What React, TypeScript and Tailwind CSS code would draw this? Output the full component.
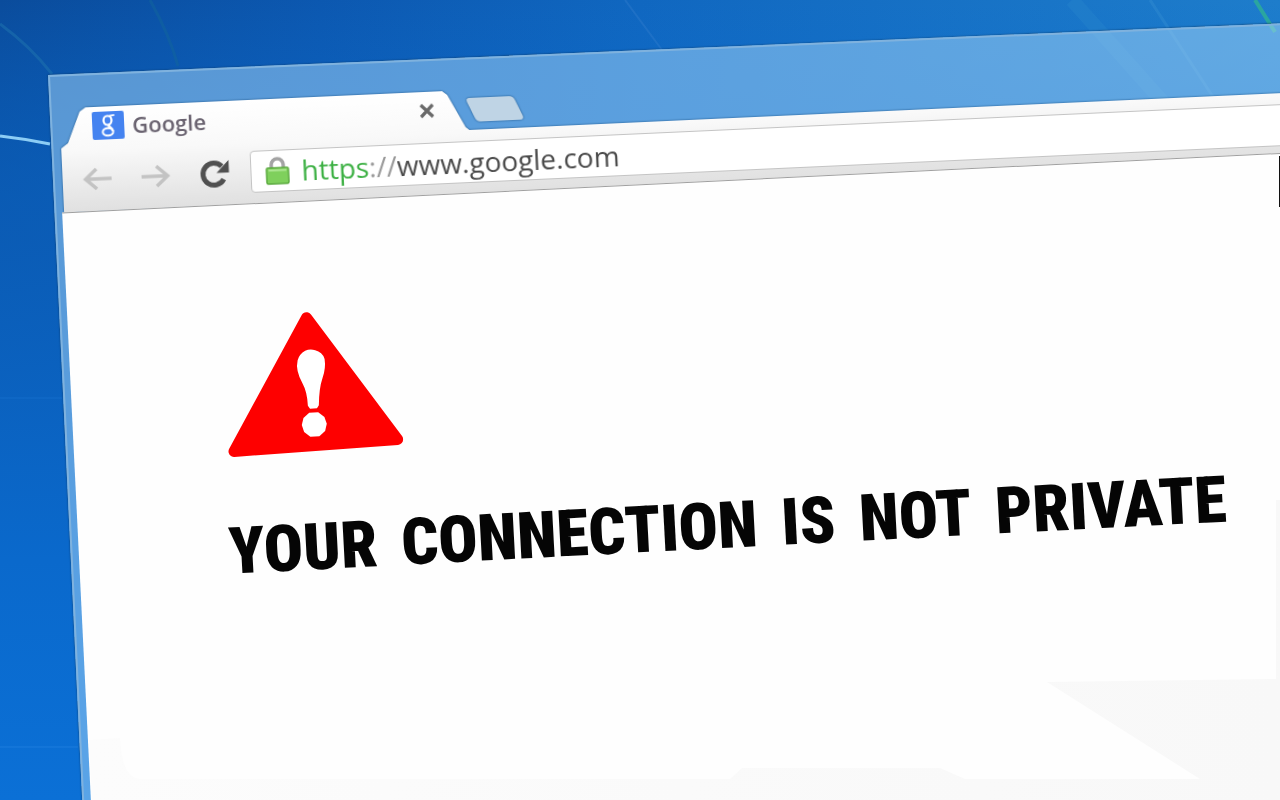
import { useState } from "react";

const HEADING = ["YOUR", "CONNECTION", "IS", "NOT", "PRIVATE"];

function Wallpaper() {
  return (
    <svg
      className="absolute inset-0 h-full w-full"
      viewBox="0 0 1280 800"
      preserveAspectRatio="none"
      fill="none"
      aria-hidden="true"
    >
      <defs>
        <linearGradient id="sky" x1="0" y1="0" x2="1" y2="0">
          <stop offset="0" stopColor="#0a4c9c" />
          <stop offset="0.25" stopColor="#0c58b0" />
          <stop offset="0.5" stopColor="#1067c0" />
          <stop offset="1" stopColor="#1e7dcb" />
        </linearGradient>
        <linearGradient id="depth" x1="0" y1="0" x2="0" y2="1">
          <stop offset="0" stopColor="#0b70d6" stopOpacity="0" />
          <stop offset="0.3" stopColor="#0b60bc" stopOpacity="0.8" />
          <stop offset="0.7" stopColor="#0a69cc" />
          <stop offset="1" stopColor="#0b70d6" />
        </linearGradient>
      </defs>
      <rect width="1280" height="800" fill="url(#sky)" />
      <rect width="1280" height="800" fill="url(#depth)" />
      <path d="M0 24Q30 46 52 74" stroke="#1c70ad" strokeWidth="3" opacity="0.6" />
      <path d="M150 0Q170 36 178 66" stroke="#12659c" strokeWidth="3" opacity="0.5" />
      <path d="M625 0L662 50" stroke="#3f86cf" strokeWidth="2" opacity="0.3" />
      <path d="M1072 0L1170 110" stroke="#3c9bd2" strokeWidth="14" opacity="0.16" />
      <path d="M1150 0L1215 100" stroke="#4fa6dc" strokeWidth="3" opacity="0.2" />
      <path d="M1255 0L1275 32" stroke="#2aa5a0" strokeWidth="4" />
      <path d="M0 136Q26 139 50 144" stroke="#8ccdf5" strokeWidth="3" />
      <path d="M0 747H78" stroke="#2a86e2" opacity="0.6" />
      <path d="M0 398H62" stroke="#2a86e2" opacity="0.3" />
    </svg>
  );
}

function GoogleMark() {
  return (
    <svg width="32" height="28" viewBox="0 0 32 28" fill="none" aria-hidden="true">
      <rect width="32" height="28" rx="2" fill="#4583f0" />
      <ellipse cx="15.5" cy="9" rx="4" ry="4.5" stroke="#fff" strokeWidth="2.2" />
      <path d="M17 4.6L22.500 3.800" stroke="#fff" strokeWidth="1.8" />
      <path d="M17 13C14.500 15.500 20.500 16 20.500 20" stroke="#fff" strokeWidth="2.4" />
      <ellipse cx="15.5" cy="20.500" rx="5.2" ry="3.8" stroke="#fff" strokeWidth="2" />
    </svg>
  );
}

function ArrowIcon({ flip = false }: { flip?: boolean }) {
  return (
    <svg
      width="30"
      height="24"
      viewBox="0 0 30 24"
      fill="none"
      stroke="#c3c3c3"
      strokeWidth="3.6"
      className={flip ? "rotate-180" : undefined}
      aria-hidden="true"
    >
      <path d="M29 12H3M14 2L3 12L14 22" />
    </svg>
  );
}

function ReloadIcon() {
  return (
    <svg width="32" height="30" viewBox="0 0 32 30" fill="none" aria-hidden="true">
      <path d="M25 21A11 11 0 1 1 23.5 8" stroke="#505050" strokeWidth="5" />
      <path d="M30.5 2V14.5H18Z" fill="#505050" />
    </svg>
  );
}

function LockIcon() {
  return (
    <svg width="24" height="28" viewBox="0 0 24 28" fill="none" aria-hidden="true">
      <path d="M6 14V8a6 6 0 0 1 12 0v6" stroke="#a3a3a3" strokeWidth="3.5" />
      <rect x="1" y="11" width="22" height="16" rx="1.5" fill="#7fd05c" stroke="#5cab40" strokeWidth="1.5" />
      <path d="M3 13.5H21" stroke="#aee793" strokeWidth="2" />
    </svg>
  );
}

function WarningSign() {
  return (
    <svg width="176" height="144" viewBox="0 0 176 144" role="img" aria-label="Warning">
      <path
        d="M85 6L6 136L170 132Z"
        fill="#fe0000"
        stroke="#fe0000"
        strokeWidth="11"
        strokeLinejoin="round"
      />
      <path
        d="M82 39Q87 37 92 39Q99 41 101 48Q102 57 98 67Q94 77 93 94L91 97H84L82 94Q82 80 78 72Q71 58 74 48Q76 42 82 39Z"
        fill="#fff"
      />
      <path d="M83 101H92L98 106L100 113L98 120L92 125H83L77 120L75 113L77 106Z" fill="#fff" />
    </svg>
  );
}

function TabStrip() {
  return (
    <div className="flex h-10 items-start">
      <div className="flex h-[42px] w-[411px] shrink-0 items-center bg-linear-to-b from-white to-[#f9f9f9] pr-9 pb-1 pl-8 [clip-path:polygon(0_100%,0_40px,7px_35px,20px_4px,26px_0,calc(100%-28px)_0,calc(100%-23px)_4px,calc(100%-6px)_37px,100%_100%)]">
        <button type="button" className="flex flex-1 items-center gap-2">
          <GoogleMark />
          <span className="text-[22px] leading-7 font-semibold text-[#6a6370]">Google</span>
        </button>
        <button type="button" aria-label="Close tab">
          <svg width="16" height="16" viewBox="0 0 16 16" stroke="#6a6a6a" strokeWidth="3.2" aria-hidden="true">
            <path d="M2 2L14 14M14 2L2 14" />
          </svg>
        </button>
      </div>
      <button
        type="button"
        aria-label="New tab"
        className="mt-2 h-6 w-12 skew-x-[24deg] rounded-sm bg-[#bfd4e5]"
      />
    </div>
  );
}

function Toolbar() {
  const [address, setAddress] = useState("www.google.com");

  return (
    <div className="flex h-16 items-center bg-linear-to-b from-[#fafafa] to-[#e0e0e0] pl-5">
      <div className="flex items-center gap-7">
        <button type="button" aria-label="Back">
          <ArrowIcon />
        </button>
        <button type="button" aria-label="Forward">
          <ArrowIcon flip />
        </button>
        <button type="button" aria-label="Reload">
          <ReloadIcon />
        </button>
      </div>
      <label className="ml-5 flex h-[42px] flex-1 items-center rounded-sm border border-[#c4c4c4] bg-white pl-[14px] text-[28px] leading-9 font-medium">
        <LockIcon />
        <span className="pl-3 text-[#3cb043]">https</span>
        <span className="font-normal text-[#999]">://</span>
        <input
          type="text"
          aria-label="Address"
          value={address}
          onChange={(e) => setAddress(e.target.value)}
          className="min-w-0 flex-1 bg-transparent text-[#4a4a4a] outline-none"
        />
      </label>
    </div>
  );
}

export default function App() {
  return (
    <div className="relative h-screen overflow-hidden font-['Open_Sans','Noto_Sans',sans-serif]">
      <Wallpaper />

      {/* Browser window, tilted and running off the right and bottom edges */}
      <div className="absolute top-[75px] -right-24 -bottom-36 left-12 flex origin-top-left -rotate-[2.4deg] flex-col pt-[34px] pl-[10px]">
        <div className="absolute inset-0 origin-top-left skew-x-[0.3deg] border-2 border-[#7fb2de] bg-[#a8d8fa]/50 shadow-[0_0_2px_0_#0a3560]" />

        <div className="relative flex flex-1 origin-top-left -rotate-[0.2deg] flex-col">
          <header className="drop-shadow-[0_0_1px_#1d5488]">
            <TabStrip />
            <Toolbar />
          </header>

          <main className="relative -ml-[2px] flex-1 origin-top-left -rotate-[0.2deg] border-t border-[#a0a0a0] bg-[#fefefe] pt-[110px] pl-[154px]">
            <WarningSign />
            <h1 className="mt-[52px] -ml-1 flex origin-left -rotate-[0.2deg] gap-6 font-['Roboto_Condensed','Roboto',sans-serif] text-[65px] leading-[80px] font-black whitespace-nowrap text-[#050505]">
              {HEADING.map((word) => (
                <span key={word}>{word}</span>
              ))}
            </h1>
          </main>
        </div>
      </div>

      {/* Faint shading at the foot of the page */}
      <svg
        className="pointer-events-none absolute inset-0 h-full w-full"
        viewBox="0 0 1280 800"
        preserveAspectRatio="none"
        aria-hidden="true"
      >
        <defs>
          <linearGradient id="foot" x1="0" y1="0" x2="1" y2="0">
            <stop offset="0" stopColor="#fcfcfc" />
            <stop offset="1" stopColor="#f8f8f8" />
          </linearGradient>
        </defs>
        <path
          d="M1047 682L1276 679V500H1280V800H92L89 740L120 738Q122 778 140 779H730L742 768H940L965 779H1200Z"
          fill="url(#foot)"
        />
        <path d="M1280 156H1279V207H1280Z" fill="#111" />
      </svg>
    </div>
  );
}
